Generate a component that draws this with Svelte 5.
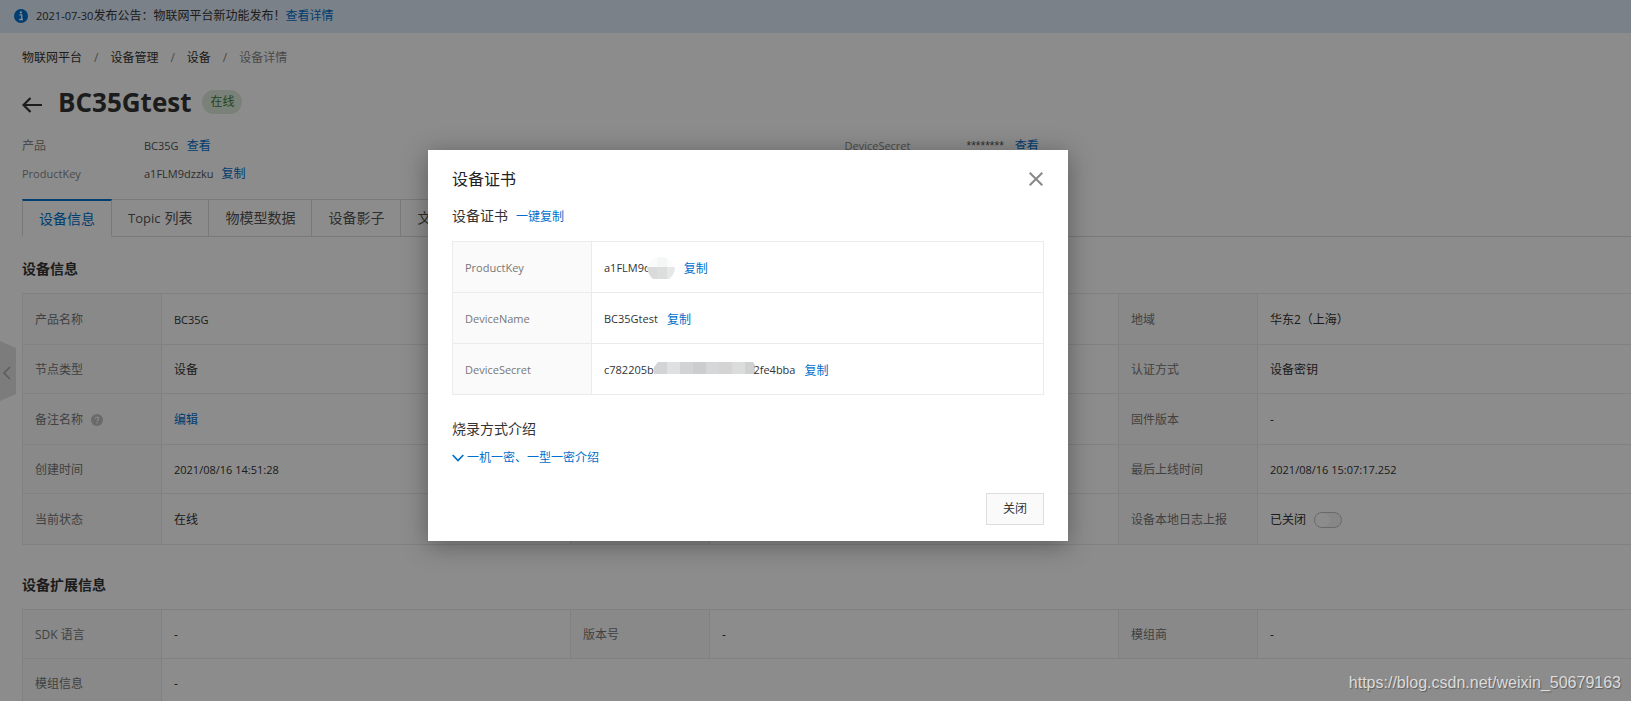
<script lang="ts">
  type Cell = { label: string; value: string; kind?: "help" | "switch" };

  const crumbs = ["物联网平台", "设备管理", "设备"];
  const tabs = [
    { zh: "设备信息" },
    { en: "Topic", zh: "列表" },
    { zh: "物模型数据" },
    { zh: "设备影子" },
    { zh: "文件管理" },
  ];

  const blank: Cell = { label: "", value: "" };

  const deviceRows: Cell[][] = [
    [{ label: "产品名称", value: "BC35G" }, blank, { label: "地域", value: "华东2（上海）" }],
    [{ label: "节点类型", value: "设备" }, blank, { label: "认证方式", value: "设备密钥" }],
    [{ label: "备注名称", value: "编辑", kind: "help" }, blank, { label: "固件版本", value: "-" }],
    [
      { label: "创建时间", value: "2021/08/16 14:51:28" },
      blank,
      { label: "最后上线时间", value: "2021/08/16 15:07:17.252" },
    ],
    [
      { label: "当前状态", value: "在线" },
      blank,
      { label: "设备本地日志上报", value: "已关闭", kind: "switch" },
    ],
  ];

  const extRows: Cell[][] = [
    [
      { label: "SDK 语言", value: "-" },
      { label: "版本号", value: "-" },
      { label: "模组商", value: "-" },
    ],
    [{ label: "模组信息", value: "-" }],
  ];

  let activeTab = $state(0);
  let logOn = $state(false);
  let open = $state(true);

  // latin-only values are set one size smaller than the Chinese text
  const isLatin = (s: string) => /^[\x20-\x7e]{2,}$/.test(s);

  const keyTones = ["#fafbfb", "#f5f6f6", "#fbfbfb", "#d9dadb", "#dcdddd", "#e6e7e7"];
  const secretTones = ["#d3d4d5", "#dfe0e0", "#d2d3d4", "#cccdcf", "#d6d7d8", "#d3d4d3", "#dbdcdc", "#cfd0d2"];
</script>

{#snippet infoTable(rows: Cell[][], name: string)}
  <table class="info" class:compact={name === "ext"}>
    <colgroup>
      {#each { length: 3 } as _}
        <col class="col-label" /><col />
      {/each}
    </colgroup>
    <tbody>
      {#each rows as row}
        <tr>
          {#each row as cell}
            <th scope="row">
              {cell.label}
              {#if cell.kind === "help"}
                <svg class="help" viewBox="0 0 12 12" width="12" height="12" aria-hidden="true">
                  <circle cx="6" cy="6" r="6" fill="#c1c1c1" />
                  <path d="M4.3 4.8a1.7 1.6 0 1 1 2.5 1.4q-.8.4-.8 1.1" fill="none" stroke="#fff" stroke-width="1.1" />
                  <circle cx="6" cy="9" r=".7" fill="#fff" />
                </svg>
              {/if}
            </th>
            <td colspan={row.length === 1 ? 5 : 1} class:latin={isLatin(cell.value)}>
              {#if cell.kind === "help"}
                <a href="#edit">{cell.value}</a>
              {:else if cell.kind === "switch"}
                <label class="switch">
                  {cell.value}
                  <input type="checkbox" role="switch" bind:checked={logOn} />
                </label>
              {:else}
                {cell.value}
              {/if}
            </td>
          {/each}
        </tr>
      {/each}
    </tbody>
  </table>
{/snippet}

<div class="viewport">
  <div class="page">
    <div class="notice">
      <svg viewBox="0 0 14 14" width="14" height="14" aria-hidden="true">
        <circle cx="7" cy="7" r="7" fill="#0070cc" />
        <path d="M5.4 5.8h2.3v4.4M5.2 10.5h3.8" fill="none" stroke="#fff" stroke-width="1.3" />
        <circle cx="6.9" cy="3.4" r="1.1" fill="#fff" />
      </svg>
      <span><span class="latin">2021-07-30</span>发布公告：物联网平台新功能发布！<a href="#notice">查看详情</a></span>
    </div>

    <main>
      <nav class="crumbs" aria-label="breadcrumb">
        {#each crumbs as crumb}
          <a href="#crumb">{crumb}</a><span class="sep">/</span>
        {/each}
        <span class="current">设备详情</span>
      </nav>

      <header>
        <button class="back" aria-label="返回">
          <svg viewBox="0 0 20 16" width="20" height="16">
            <path d="M20 8H1.5M8.5 1 1.5 8l7 7" fill="none" stroke="#333" stroke-width="2.2" />
          </svg>
        </button>
        <h1>BC35Gtest</h1>
        <span class="badge">在线</span>
      </header>

      <dl class="summary">
        <div><dt>产品</dt><dd><span class="latin">BC35G</span><a href="#product">查看</a></dd></div>
        <div><dt class="latin">DeviceSecret</dt><dd><span class="stars">********</span><a href="#secret">查看</a></dd></div>
        <div><dt class="latin">ProductKey</dt><dd><span class="latin">a1FLM9dzzku</span><a href="#copy">复制</a></dd></div>
      </dl>

      <div class="tabs" role="tablist">
        {#each tabs as tab, i}
          <button role="tab" aria-selected={i === activeTab} class:active={i === activeTab} onclick={() => (activeTab = i)}>
            {#if tab.en}<span class="tab-en">{tab.en}</span>{/if}{tab.zh}
          </button>
        {/each}
        <div class="tab-fill"></div>
      </div>

      <h2>设备信息</h2>
      {@render infoTable(deviceRows, "device")}

      <h2 class="second">设备扩展信息</h2>
      {@render infoTable(extRows, "ext")}
    </main>
  </div>

  <button class="collapse" aria-label="收起">
    <svg viewBox="0 0 16 60" width="16" height="60">
      <path d="M0 0 16 7V53L0 60Z" fill="#e2e2e2" />
      <path d="M10 26 4 32l6 6" fill="none" stroke="#a8a8a8" stroke-width="1.6" />
    </svg>
  </button>

  {#if open}
    <div class="overlay">
      <div class="dialog" role="dialog" aria-modal="true" aria-labelledby="dialog-title">
        <div class="dialog-head">
          <h2 id="dialog-title">设备证书</h2>
          <button class="close" aria-label="关闭对话框" onclick={() => (open = false)}>
            <svg viewBox="0 0 14 14" width="14" height="14">
              <path d="M.7.7l12.6 12.6M13.3.7.7 13.3" fill="none" stroke="#888" stroke-width="2" />
            </svg>
          </button>
        </div>

        <div class="cert-head">
          <h3>设备证书</h3>
          <a href="#copy-all">一键复制</a>
        </div>

        <table class="cert">
          <tbody>
            <tr>
              <th scope="row" class="latin">ProductKey</th>
              <td>
                <div class="value">
                  <span>a1FLM9d</span>
                  <svg class="mask" viewBox="0 0 28 22" width="28" height="22" aria-hidden="true">
                    <clipPath id="round"><path d="M0 10Q3 0 14 0t14 12q-1 6-6 10H6Q1 18 0 10Z" /></clipPath>
                    <g clip-path="url(#round)">
                      {#each keyTones as tone, i}
                        <rect x={(i % 3) * 10} y={i < 3 ? 0 : 10} width="10" height="12" fill={tone} />
                      {/each}
                    </g>
                  </svg>
                  <a href="#copy-key">复制</a>
                </div>
              </td>
            </tr>
            <tr>
              <th scope="row" class="latin">DeviceName</th>
              <td><div class="value"><span>BC35Gtest</span><a href="#copy-name">复制</a></div></td>
            </tr>
            <tr>
              <th scope="row" class="latin">DeviceSecret</th>
              <td>
                <div class="value">
                  <span>c782205bf</span>
                  <svg class="mask wide" viewBox="0 0 101 22" width="101" height="22" aria-hidden="true">
                    <clipPath id="strip"><path d="M4 3H99l2 3v9H0V8Z" /></clipPath>
                    <g clip-path="url(#strip)">
                      {#each secretTones as tone, i}
                        <rect x={i * 13} y="3" width="13" height="12" fill={tone} />
                      {/each}
                    </g>
                  </svg>
                  <span>2fe4bba</span>
                  <a href="#copy-secret">复制</a>
                </div>
              </td>
            </tr>
          </tbody>
        </table>

        <h3 class="burn">烧录方式介绍</h3>
        <a class="expand" href="#intro">
          <svg viewBox="0 0 12 8" width="12" height="8" aria-hidden="true">
            <path d="M.7 1 6 6.6 11.3 1" fill="none" stroke="#0070cc" stroke-width="1.7" />
          </svg>
          一机一密、一型一密介绍
        </a>

        <div class="dialog-foot">
          <button onclick={() => (open = false)}>关闭</button>
        </div>
      </div>
    </div>
  {/if}

  <div class="watermark">https://blog.csdn.net/weixin_50679163</div>
</div>

<style>
  :global(body) {
    margin: 0;
  }

  .viewport {
    position: relative;
    height: 100vh;
    overflow: hidden;
    background: #fff;
    font-family: "Open Sans", "Noto Sans CJK SC", sans-serif;
    font-size: 12px;
    line-height: 20px;
    color: #333;
  }

  .page {
    min-width: 1667px;
  }

  a {
    color: #0070cc;
    text-decoration: none;
  }

  button {
    font: inherit;
    color: inherit;
    background: none;
    border: 0;
    padding: 0;
    cursor: pointer;
  }

  svg {
    display: block;
    flex: none;
  }

  h1,
  h2,
  h3,
  dl,
  dd {
    margin: 0;
  }

  .latin {
    font-size: 11px;
  }

  .notice {
    display: flex;
    align-items: center;
    gap: 8px;
    height: 33px;
    padding: 0 14px 2px;
    box-sizing: border-box;
    background: #dfebf8;
  }

  main {
    padding: 15px 0 0 22px;
  }

  .crumbs {
    display: flex;
  }

  .crumbs a {
    color: #333;
  }

  .sep {
    margin: 0 12px;
    color: #888;
  }

  .current {
    color: #888;
  }

  header {
    display: flex;
    align-items: center;
    height: 40px;
    margin-top: 14px;
  }

  .back {
    margin: 6px 16px 0 0;
  }

  h1 {
    font-size: 26px;
    line-height: 40px;
    font-weight: 700;
  }

  .badge {
    margin-left: 11px;
    padding: 0 8px;
    border-radius: 12px;
    line-height: 24px;
    background: #dcebdc;
    color: #3c7f3c;
  }

  .summary {
    display: grid;
    grid-template-columns: 1fr 1fr;
    row-gap: 8px;
    margin-top: 14px;
  }

  .summary div {
    display: flex;
  }

  dt {
    width: 122px;
    color: #888;
  }

  dd {
    color: #555;
  }

  dd a {
    margin-left: 8px;
  }

  .stars {
    margin-right: 3px;
    font-family: "Liberation Sans", sans-serif;
  }

  .tabs {
    display: flex;
    height: 38px;
    margin-top: 15px;
    font-size: 14px;
  }

  .tabs button {
    padding: 0 16px;
    border: solid #dcdcdc;
    border-width: 1px 1px 1px 0;
    color: #555;
  }

  .tabs button:first-child {
    border-left-width: 1px;
  }

  .tabs .active {
    border-top: 2px solid #0070cc;
    border-bottom-color: transparent;
    color: #0070cc;
  }

  .tab-en {
    margin-right: 4px;
    font-size: 13px;
  }

  .tab-fill {
    flex: 1;
    border-bottom: 1px solid #dcdcdc;
  }

  main h2 {
    margin: 22px 0 14px;
    font-size: 14px;
    font-weight: 700;
  }

  main .second {
    margin-top: 30px;
  }

  table {
    width: 100%;
    table-layout: fixed;
    border-collapse: collapse;
  }

  .col-label {
    width: 139px;
  }

  th,
  td {
    box-sizing: border-box;
    padding: 2px 12px 0;
    border: 1px solid #ebebeb;
    text-align: left;
    font-weight: 400;
  }

  th {
    background: #fafafa;
    color: #777;
  }

  .info tr:nth-child(odd) > * {
    height: 51px;
  }

  .info tr:nth-child(even) > *,
  .compact tr:nth-child(odd) > * {
    height: 49px;
  }

  .help {
    display: inline-block;
    margin-left: 5px;
    vertical-align: -2px;
  }

  .switch {
    display: flex;
    align-items: center;
    gap: 8px;
  }

  .switch input {
    appearance: none;
    width: 28px;
    height: 16px;
    margin: 0;
    border: 1px solid #c0c0c6;
    border-radius: 8px;
    background: radial-gradient(circle at 7px 7px, #fff 7px, #f6f6f6 8px);
  }

  .switch input:checked {
    background: #0070cc;
  }

  .collapse {
    position: absolute;
    left: 0;
    top: 341px;
  }

  .overlay {
    position: absolute;
    inset: 0;
    display: flex;
    justify-content: center;
    align-items: flex-start;
    padding: 150px 135px 0 0;
    background: rgba(0, 0, 0, 0.45);
  }

  .dialog {
    width: 640px;
    box-sizing: border-box;
    padding: 16px 24px;
    background: #fff;
    box-shadow: 0 4px 24px rgba(0, 0, 0, 0.35);
  }

  .dialog-head {
    display: flex;
    justify-content: space-between;
    align-items: center;
    height: 26px;
  }

  .dialog-head h2 {
    font-size: 16px;
    font-weight: 400;
    color: #222;
  }

  .close {
    margin-right: 1px;
  }

  .cert-head {
    display: flex;
    align-items: baseline;
    gap: 8px;
    height: 20px;
    margin: 14px 0 15px;
  }

  h3 {
    font-size: 14px;
    font-weight: 400;
  }

  .cert th,
  .cert td {
    height: 51px;
  }

  .cert th {
    width: 139px;
  }

  .value {
    display: flex;
    align-items: center;
  }

  .value span {
    font-size: 11px;
  }

  .value a {
    margin: 1px 0 0 9px;
  }

  .mask {
    margin-left: -4px;
  }

  .wide {
    margin: 0 -2px 0 -3px;
  }

  .burn {
    margin-top: 24px;
  }

  .expand {
    display: flex;
    align-items: center;
    gap: 3px;
    margin-top: 9px;
  }

  .dialog-foot {
    display: flex;
    justify-content: flex-end;
    margin-top: 25px;
  }

  .dialog-foot button {
    padding: 5px 16px;
    border: 1px solid #dedede;
    background: #fafafa;
  }

  .watermark {
    position: absolute;
    right: 10px;
    bottom: 8px;
    font-family: "Liberation Sans", sans-serif;
    font-size: 16px;
    color: #dcdcdc;
    text-shadow: 1px 1px 1px rgba(0, 0, 0, 0.35);
  }
</style>
